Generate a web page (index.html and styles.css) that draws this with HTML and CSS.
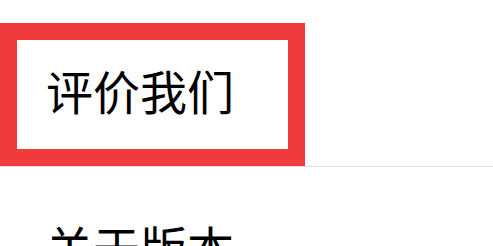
FILE: index.html
```html
<!DOCTYPE html>
<html lang="zh-CN">
<head>
<meta charset="utf-8">
<link rel="stylesheet" href="styles.css">
</head>
<body>
<ul class="menu">
  <li class="item">评价我们</li>
  <li class="item">关于版本</li>
</ul>
<div class="highlight"></div>
</body>
</html>
```
FILE: styles.css
```css
html, body {
  margin: 0;
  padding: 0;
  background: #ffffff;
  overflow: hidden;
}
body {
  width: 493px;
  height: 246px;
  position: relative;
  font-family: "Noto Sans CJK SC", "Noto Sans", sans-serif;
}
.menu {
  list-style: none;
  margin: 0;
  padding: 12px 0 0 0;
}
.item {
  display: flex;
  align-items: center;
  height: 154px;
  padding-left: 46px;
  border-bottom: 1px solid #dddddd;
  font-size: 47px;
  line-height: 1;
  color: #000000;
}
.item + .item {
  padding-top: 1px;
}
.highlight {
  position: absolute;
  left: 0;
  top: 23px;
  width: 271px;
  height: 109px;
  border: 17px solid #ef3b3c;
}
```
